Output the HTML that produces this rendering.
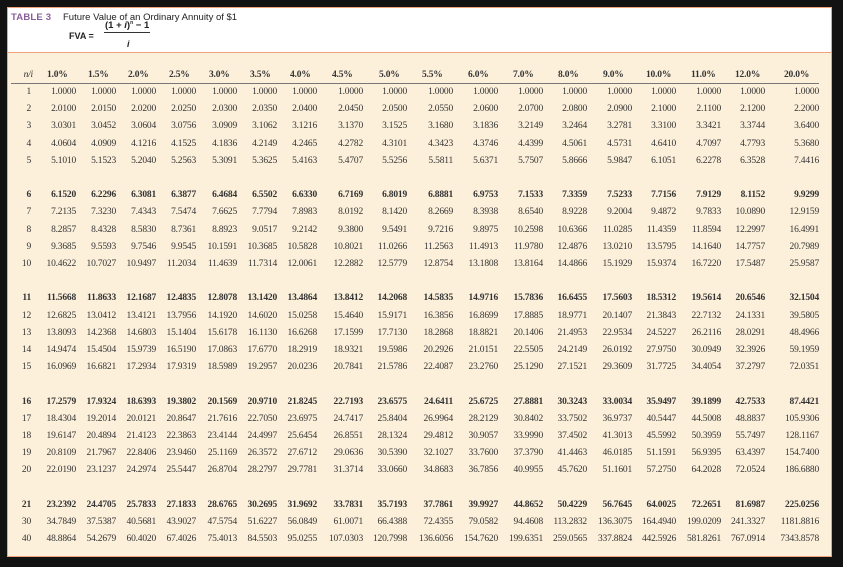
<!DOCTYPE html>
<html><head><meta charset="utf-8"><style>
html,body{margin:0;padding:0;background:#121212;width:843px;height:567px;overflow:hidden}
.panel{position:absolute;left:7px;top:7px;width:825px;height:550px;background:#fcf0db;border:1px solid #f0a27a;box-sizing:border-box}
.head{position:absolute;left:0;top:0;width:823px;height:44px;background:#fff;border-bottom:1px solid #f0a27a}
.t1{position:absolute;left:3px;top:4px;font:bold 9.5px "Liberation Sans",sans-serif;color:#8a5c9c;letter-spacing:.2px}
.t2{position:absolute;left:55px;top:4px;font:9.5px "Liberation Sans",sans-serif;color:#222}
.fva{position:absolute;left:61px;top:23px;font:bold 9px "Liberation Sans",sans-serif;color:#222}
.num{position:absolute;left:96px;top:12px;font:bold 9.5px "Liberation Sans",sans-serif;color:#222;border-bottom:1px solid #333;padding:0 1px 1px}
.den{position:absolute;left:119px;top:31px;font:italic bold 9px "Liberation Sans",sans-serif;color:#222}
table{position:absolute;left:3px;top:59px;border-collapse:collapse;table-layout:fixed;font:9.5px "Liberation Serif",serif;color:#333}
td{padding:0;text-align:right;line-height:17.2px;height:17.2px;white-space:nowrap;letter-spacing:-.2px}
tr.h td{font-weight:bold;text-align:left;padding-left:0;line-height:16px;height:16px;border-bottom:1.5px solid #777}
tr.h td:first-child{font-style:italic;font-weight:normal;text-align:right;padding-right:4px}
tr.b td{font-weight:bold}
tr.g td{height:17.2px}
td:first-child{padding-right:6px}
</style></head><body>
<div class="panel">
<div class="head">
<div class="t1">TABLE 3</div>
<div class="t2">Future Value of an Ordinary Annuity of $1</div>
<div class="fva">FVA =</div>
<div class="num">(1 + <i>i</i>)<sup style="font-size:5px">n</sup> − 1</div>
<div class="den">i</div>
</div>
<table>
<colgroup><col style="width:26px"><col style="width:39px"><col style="width:40px"><col style="width:40px"><col style="width:40px"><col style="width:41px"><col style="width:40px"><col style="width:40px"><col style="width:46px"><col style="width:44px"><col style="width:46px"><col style="width:45px"><col style="width:45px"><col style="width:44px"><col style="width:45px"><col style="width:44px"><col style="width:45px"><col style="width:44px"><col style="width:54px"></colgroup>
<tr class="h"><td>n/i</td><td style="padding-left:10px">1.0%</td><td style="padding-left:12px">1.5%</td><td style="padding-left:12px">2.0%</td><td style="padding-left:13px">2.5%</td><td style="padding-left:13px">3.0%</td><td style="padding-left:13px">3.5%</td><td style="padding-left:13px">4.0%</td><td style="padding-left:15px">4.5%</td><td style="padding-left:16px">5.0%</td><td style="padding-left:15px">5.5%</td><td style="padding-left:15px">6.0%</td><td style="padding-left:15px">7.0%</td><td style="padding-left:15px">8.0%</td><td style="padding-left:16px">9.0%</td><td style="padding-left:14px">10.0%</td><td style="padding-left:15px">11.0%</td><td style="padding-left:14px">12.0%</td><td style="padding-left:19px">20.0%</td></tr>
<tr><td>1</td><td>1.0000</td><td>1.0000</td><td>1.0000</td><td>1.0000</td><td>1.0000</td><td>1.0000</td><td>1.0000</td><td>1.0000</td><td>1.0000</td><td>1.0000</td><td>1.0000</td><td>1.0000</td><td>1.0000</td><td>1.0000</td><td>1.0000</td><td>1.0000</td><td>1.0000</td><td>1.0000</td></tr>
<tr><td>2</td><td>2.0100</td><td>2.0150</td><td>2.0200</td><td>2.0250</td><td>2.0300</td><td>2.0350</td><td>2.0400</td><td>2.0450</td><td>2.0500</td><td>2.0550</td><td>2.0600</td><td>2.0700</td><td>2.0800</td><td>2.0900</td><td>2.1000</td><td>2.1100</td><td>2.1200</td><td>2.2000</td></tr>
<tr><td>3</td><td>3.0301</td><td>3.0452</td><td>3.0604</td><td>3.0756</td><td>3.0909</td><td>3.1062</td><td>3.1216</td><td>3.1370</td><td>3.1525</td><td>3.1680</td><td>3.1836</td><td>3.2149</td><td>3.2464</td><td>3.2781</td><td>3.3100</td><td>3.3421</td><td>3.3744</td><td>3.6400</td></tr>
<tr><td>4</td><td>4.0604</td><td>4.0909</td><td>4.1216</td><td>4.1525</td><td>4.1836</td><td>4.2149</td><td>4.2465</td><td>4.2782</td><td>4.3101</td><td>4.3423</td><td>4.3746</td><td>4.4399</td><td>4.5061</td><td>4.5731</td><td>4.6410</td><td>4.7097</td><td>4.7793</td><td>5.3680</td></tr>
<tr><td>5</td><td>5.1010</td><td>5.1523</td><td>5.2040</td><td>5.2563</td><td>5.3091</td><td>5.3625</td><td>5.4163</td><td>5.4707</td><td>5.5256</td><td>5.5811</td><td>5.6371</td><td>5.7507</td><td>5.8666</td><td>5.9847</td><td>6.1051</td><td>6.2278</td><td>6.3528</td><td>7.4416</td></tr>
<tr class="g"><td colspan="19"></td></tr>
<tr class="b"><td>6</td><td>6.1520</td><td>6.2296</td><td>6.3081</td><td>6.3877</td><td>6.4684</td><td>6.5502</td><td>6.6330</td><td>6.7169</td><td>6.8019</td><td>6.8881</td><td>6.9753</td><td>7.1533</td><td>7.3359</td><td>7.5233</td><td>7.7156</td><td>7.9129</td><td>8.1152</td><td>9.9299</td></tr>
<tr><td>7</td><td>7.2135</td><td>7.3230</td><td>7.4343</td><td>7.5474</td><td>7.6625</td><td>7.7794</td><td>7.8983</td><td>8.0192</td><td>8.1420</td><td>8.2669</td><td>8.3938</td><td>8.6540</td><td>8.9228</td><td>9.2004</td><td>9.4872</td><td>9.7833</td><td>10.0890</td><td>12.9159</td></tr>
<tr><td>8</td><td>8.2857</td><td>8.4328</td><td>8.5830</td><td>8.7361</td><td>8.8923</td><td>9.0517</td><td>9.2142</td><td>9.3800</td><td>9.5491</td><td>9.7216</td><td>9.8975</td><td>10.2598</td><td>10.6366</td><td>11.0285</td><td>11.4359</td><td>11.8594</td><td>12.2997</td><td>16.4991</td></tr>
<tr><td>9</td><td>9.3685</td><td>9.5593</td><td>9.7546</td><td>9.9545</td><td>10.1591</td><td>10.3685</td><td>10.5828</td><td>10.8021</td><td>11.0266</td><td>11.2563</td><td>11.4913</td><td>11.9780</td><td>12.4876</td><td>13.0210</td><td>13.5795</td><td>14.1640</td><td>14.7757</td><td>20.7989</td></tr>
<tr><td>10</td><td>10.4622</td><td>10.7027</td><td>10.9497</td><td>11.2034</td><td>11.4639</td><td>11.7314</td><td>12.0061</td><td>12.2882</td><td>12.5779</td><td>12.8754</td><td>13.1808</td><td>13.8164</td><td>14.4866</td><td>15.1929</td><td>15.9374</td><td>16.7220</td><td>17.5487</td><td>25.9587</td></tr>
<tr class="g"><td colspan="19"></td></tr>
<tr class="b"><td>11</td><td>11.5668</td><td>11.8633</td><td>12.1687</td><td>12.4835</td><td>12.8078</td><td>13.1420</td><td>13.4864</td><td>13.8412</td><td>14.2068</td><td>14.5835</td><td>14.9716</td><td>15.7836</td><td>16.6455</td><td>17.5603</td><td>18.5312</td><td>19.5614</td><td>20.6546</td><td>32.1504</td></tr>
<tr><td>12</td><td>12.6825</td><td>13.0412</td><td>13.4121</td><td>13.7956</td><td>14.1920</td><td>14.6020</td><td>15.0258</td><td>15.4640</td><td>15.9171</td><td>16.3856</td><td>16.8699</td><td>17.8885</td><td>18.9771</td><td>20.1407</td><td>21.3843</td><td>22.7132</td><td>24.1331</td><td>39.5805</td></tr>
<tr><td>13</td><td>13.8093</td><td>14.2368</td><td>14.6803</td><td>15.1404</td><td>15.6178</td><td>16.1130</td><td>16.6268</td><td>17.1599</td><td>17.7130</td><td>18.2868</td><td>18.8821</td><td>20.1406</td><td>21.4953</td><td>22.9534</td><td>24.5227</td><td>26.2116</td><td>28.0291</td><td>48.4966</td></tr>
<tr><td>14</td><td>14.9474</td><td>15.4504</td><td>15.9739</td><td>16.5190</td><td>17.0863</td><td>17.6770</td><td>18.2919</td><td>18.9321</td><td>19.5986</td><td>20.2926</td><td>21.0151</td><td>22.5505</td><td>24.2149</td><td>26.0192</td><td>27.9750</td><td>30.0949</td><td>32.3926</td><td>59.1959</td></tr>
<tr><td>15</td><td>16.0969</td><td>16.6821</td><td>17.2934</td><td>17.9319</td><td>18.5989</td><td>19.2957</td><td>20.0236</td><td>20.7841</td><td>21.5786</td><td>22.4087</td><td>23.2760</td><td>25.1290</td><td>27.1521</td><td>29.3609</td><td>31.7725</td><td>34.4054</td><td>37.2797</td><td>72.0351</td></tr>
<tr class="g"><td colspan="19"></td></tr>
<tr class="b"><td>16</td><td>17.2579</td><td>17.9324</td><td>18.6393</td><td>19.3802</td><td>20.1569</td><td>20.9710</td><td>21.8245</td><td>22.7193</td><td>23.6575</td><td>24.6411</td><td>25.6725</td><td>27.8881</td><td>30.3243</td><td>33.0034</td><td>35.9497</td><td>39.1899</td><td>42.7533</td><td>87.4421</td></tr>
<tr><td>17</td><td>18.4304</td><td>19.2014</td><td>20.0121</td><td>20.8647</td><td>21.7616</td><td>22.7050</td><td>23.6975</td><td>24.7417</td><td>25.8404</td><td>26.9964</td><td>28.2129</td><td>30.8402</td><td>33.7502</td><td>36.9737</td><td>40.5447</td><td>44.5008</td><td>48.8837</td><td>105.9306</td></tr>
<tr><td>18</td><td>19.6147</td><td>20.4894</td><td>21.4123</td><td>22.3863</td><td>23.4144</td><td>24.4997</td><td>25.6454</td><td>26.8551</td><td>28.1324</td><td>29.4812</td><td>30.9057</td><td>33.9990</td><td>37.4502</td><td>41.3013</td><td>45.5992</td><td>50.3959</td><td>55.7497</td><td>128.1167</td></tr>
<tr><td>19</td><td>20.8109</td><td>21.7967</td><td>22.8406</td><td>23.9460</td><td>25.1169</td><td>26.3572</td><td>27.6712</td><td>29.0636</td><td>30.5390</td><td>32.1027</td><td>33.7600</td><td>37.3790</td><td>41.4463</td><td>46.0185</td><td>51.1591</td><td>56.9395</td><td>63.4397</td><td>154.7400</td></tr>
<tr><td>20</td><td>22.0190</td><td>23.1237</td><td>24.2974</td><td>25.5447</td><td>26.8704</td><td>28.2797</td><td>29.7781</td><td>31.3714</td><td>33.0660</td><td>34.8683</td><td>36.7856</td><td>40.9955</td><td>45.7620</td><td>51.1601</td><td>57.2750</td><td>64.2028</td><td>72.0524</td><td>186.6880</td></tr>
<tr class="g"><td colspan="19"></td></tr>
<tr class="b"><td>21</td><td>23.2392</td><td>24.4705</td><td>25.7833</td><td>27.1833</td><td>28.6765</td><td>30.2695</td><td>31.9692</td><td>33.7831</td><td>35.7193</td><td>37.7861</td><td>39.9927</td><td>44.8652</td><td>50.4229</td><td>56.7645</td><td>64.0025</td><td>72.2651</td><td>81.6987</td><td>225.0256</td></tr>
<tr><td>30</td><td>34.7849</td><td>37.5387</td><td>40.5681</td><td>43.9027</td><td>47.5754</td><td>51.6227</td><td>56.0849</td><td>61.0071</td><td>66.4388</td><td>72.4355</td><td>79.0582</td><td>94.4608</td><td>113.2832</td><td>136.3075</td><td>164.4940</td><td>199.0209</td><td>241.3327</td><td>1181.8816</td></tr>
<tr><td>40</td><td>48.8864</td><td>54.2679</td><td>60.4020</td><td>67.4026</td><td>75.4013</td><td>84.5503</td><td>95.0255</td><td>107.0303</td><td>120.7998</td><td>136.6056</td><td>154.7620</td><td>199.6351</td><td>259.0565</td><td>337.8824</td><td>442.5926</td><td>581.8261</td><td>767.0914</td><td>7343.8578</td></tr>
</table>
</div>
</body></html>
